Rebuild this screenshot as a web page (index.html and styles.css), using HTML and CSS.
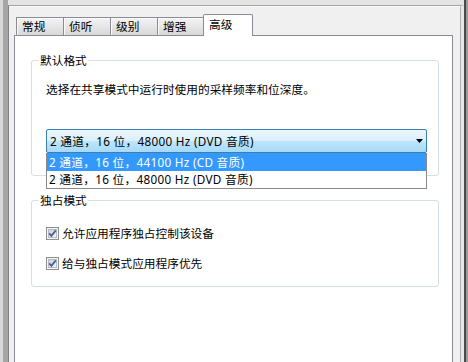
FILE: index.html
```html
<!DOCTYPE html>
<html lang="zh-CN">
<head>
<meta charset="utf-8">
<title>高级</title>
<link rel="stylesheet" href="styles.css">
</head>
<body>
<div class="frame-outer">
  <div class="frame-mid">
    <div class="frame-inner">
      <div class="frame-line">
        <div class="dialog">
          <div class="tabs">
            <div class="tab">常规</div>
            <div class="tab">侦听</div>
            <div class="tab">级别</div>
            <div class="tab">增强</div>
            <div class="tab tab-active">高级</div>
          </div>
          <div class="panel">
            <div class="group group-format">
              <div class="group-title">默认格式</div>
              <div class="group-body">
                <p class="desc">选择在共享模式中运行时使用的采样频率和位深度。</p>
                <div class="combo-wrap">
                  <div class="combo">
                    <span class="combo-text">2 通道，16 位，48000 Hz (DVD 音质)</span>
                    <svg class="combo-arrow" width="7" height="4" viewBox="0 0 7 4"><path d="M0 0H7L3.5 4Z" fill="#000"/></svg>
                  </div>
                  <ul class="combo-list">
                    <li class="combo-item combo-item-selected">2 通道，16 位，44100 Hz (CD 音质)</li>
                    <li class="combo-item">2 通道，16 位，48000 Hz (DVD 音质)</li>
                  </ul>
                </div>
              </div>
            </div>
            <div class="group group-exclusive">
              <div class="group-title">独占模式</div>
              <div class="group-body">
                <label class="check-row">
                  <svg class="checkbox" width="13" height="13" viewBox="0 0 13 13">
                    <defs><linearGradient id="cb1" x1="0" y1="0" x2="1" y2="1"><stop offset="0" stop-color="#c9cdd3"/><stop offset="1" stop-color="#f7f7f7"/></linearGradient></defs>
                    <rect x="0.5" y="0.5" width="12" height="12" fill="#f4f4f4" stroke="#8e8f8f"/>
                    <rect x="2.5" y="2.5" width="8" height="8" fill="url(#cb1)" stroke="#b8bcc2"/>
                    <path d="M3.2 6.3 L5.4 8.8 L9.8 3.4" fill="none" stroke="#4a5f9a" stroke-width="1.8"/>
                  </svg>
                  <span class="check-label">允许应用程序独占控制该设备</span>
                </label>
                <label class="check-row">
                  <svg class="checkbox" width="13" height="13" viewBox="0 0 13 13">
                    <defs><linearGradient id="cb2" x1="0" y1="0" x2="1" y2="1"><stop offset="0" stop-color="#c9cdd3"/><stop offset="1" stop-color="#f7f7f7"/></linearGradient></defs>
                    <rect x="0.5" y="0.5" width="12" height="12" fill="#f4f4f4" stroke="#8e8f8f"/>
                    <rect x="2.5" y="2.5" width="8" height="8" fill="url(#cb2)" stroke="#b8bcc2"/>
                    <path d="M3.2 6.3 L5.4 8.8 L9.8 3.4" fill="none" stroke="#4a5f9a" stroke-width="1.8"/>
                  </svg>
                  <span class="check-label">给与独占模式应用程序优先</span>
                </label>
              </div>
            </div>
          </div>
        </div>
      </div>
    </div>
  </div>
</div>
</body>
</html>
```
FILE: styles.css
```css
html, body {
  margin: 0;
  padding: 0;
}
body {
  width: 468px;
  height: 362px;
  overflow: hidden;
  font-family: "Noto Sans", "Noto Sans CJK SC", sans-serif;
  font-size: 11.7px;
  color: #000;
}
.frame-outer {
  box-sizing: border-box;
  height: 362px;
  display: flex;
  border-left: 3px solid #d9d9d9;
  border-right: 2px solid #9a9a9a;
}
.frame-mid {
  flex: 1;
  display: flex;
  flex-direction: column;
  border-left: 5px solid #a6a6a6;
  border-right: 2px solid #4a4a4a;
  padding-top: 5px;
  background: #e4e4e4;
}
.frame-inner {
  flex: 1;
  display: flex;
  flex-direction: column;
  border-left: 1px solid #808080;
  border-top: 1px solid #a4a4a4;
  border-right: 3px solid #e6e6e6;
}
.frame-line {
  flex: 1;
  display: flex;
  flex-direction: column;
  border-top: 1px solid #fafafa;
  border-right: 1px solid #b0b0b0;
}
.dialog {
  flex: 1;
  display: flex;
  flex-direction: column;
  background: #f0f0f0;
  padding: 7px 7px 0 5px;
  min-height: 0;
}
.tabs {
  display: flex;
  align-items: flex-start;
  height: 22px;
  padding-left: 2px;
  margin-bottom: -1px;
  position: relative;
  z-index: 1;
}
.tab {
  box-sizing: border-box;
  width: 47px;
  height: 18px;
  margin-top: 3px;
  padding-left: 5px;
  border: 1px solid #898c95;
  border-right: 0;
  border-bottom: 0;
  line-height: 17px;
  background: linear-gradient(#f3f3f3, #e6e6e6 50%, #d8d8d8);
  box-shadow: inset 1px 1px 0 #fbfbfb;
  white-space: nowrap;
}
.tab-active {
  width: 50px;
  height: 22px;
  margin-top: 0;
  margin-left: -1px;
  padding-top: 1px;
  border-right: 1px solid #898c95;
  border-radius: 2px 2px 0 0;
  background: #fff;
  box-shadow: none;
}
.panel {
  flex: 1;
  display: flex;
  flex-direction: column;
  border: 1px solid #898c95;
  background: #fff;
  margin-bottom: -10px;
}
.group {
  display: flex;
  flex-direction: column;
  margin: 24px 13px 0 16px;
  border: 1px solid #d5dfe5;
  border-radius: 3px;
}
.group-title {
  align-self: flex-start;
  margin: -9px 0 0 7px;
  padding: 0 1px;
  background: #fff;
  line-height: 17px;
}
.group-format .group-body {
  padding: 0 11px 22px 14px;
}
.group-exclusive .group-body {
  padding: 0 11px 14px 14px;
}
.desc {
  margin: 12px 0 0;
  line-height: 17px;
}
.combo-wrap {
  position: relative;
  margin-top: 31px;
}
.combo {
  box-sizing: border-box;
  height: 24px;
  display: flex;
  align-items: center;
  padding: 0 3px;
  border: 1px solid #3c7fb1;
  border-radius: 2px;
  background: linear-gradient(#eaf6fd, #d9f0fc 50%, #bee6fd 50%, #a7d9f5);
}
.combo-text {
  flex: 1;
  line-height: 22px;
  white-space: nowrap;
  letter-spacing: 0.3px;
}
.combo-arrow {
  display: block;
}
.combo-list {
  position: absolute;
  top: 100%;
  left: 0;
  right: 0;
  margin: 0;
  padding: 0;
  list-style: none;
  background: #fff;
  border: 1px solid #8a8a8a;
  border-top: 0;
  z-index: 2;
}
.combo-item {
  line-height: 17px;
  padding-left: 2px;
  white-space: nowrap;
  letter-spacing: 0.3px;
}
.combo-item-selected {
  padding-top: 1px;
  background: #3399ff;
  color: #fff;
}
.check-row {
  display: flex;
  align-items: center;
  height: 17px;
  line-height: 17px;
  margin-top: 13px;
}
.check-row:first-child {
  margin-top: 16px;
}
.checkbox {
  display: block;
  flex: none;
}
.check-label {
  margin-left: 3px;
}
```
